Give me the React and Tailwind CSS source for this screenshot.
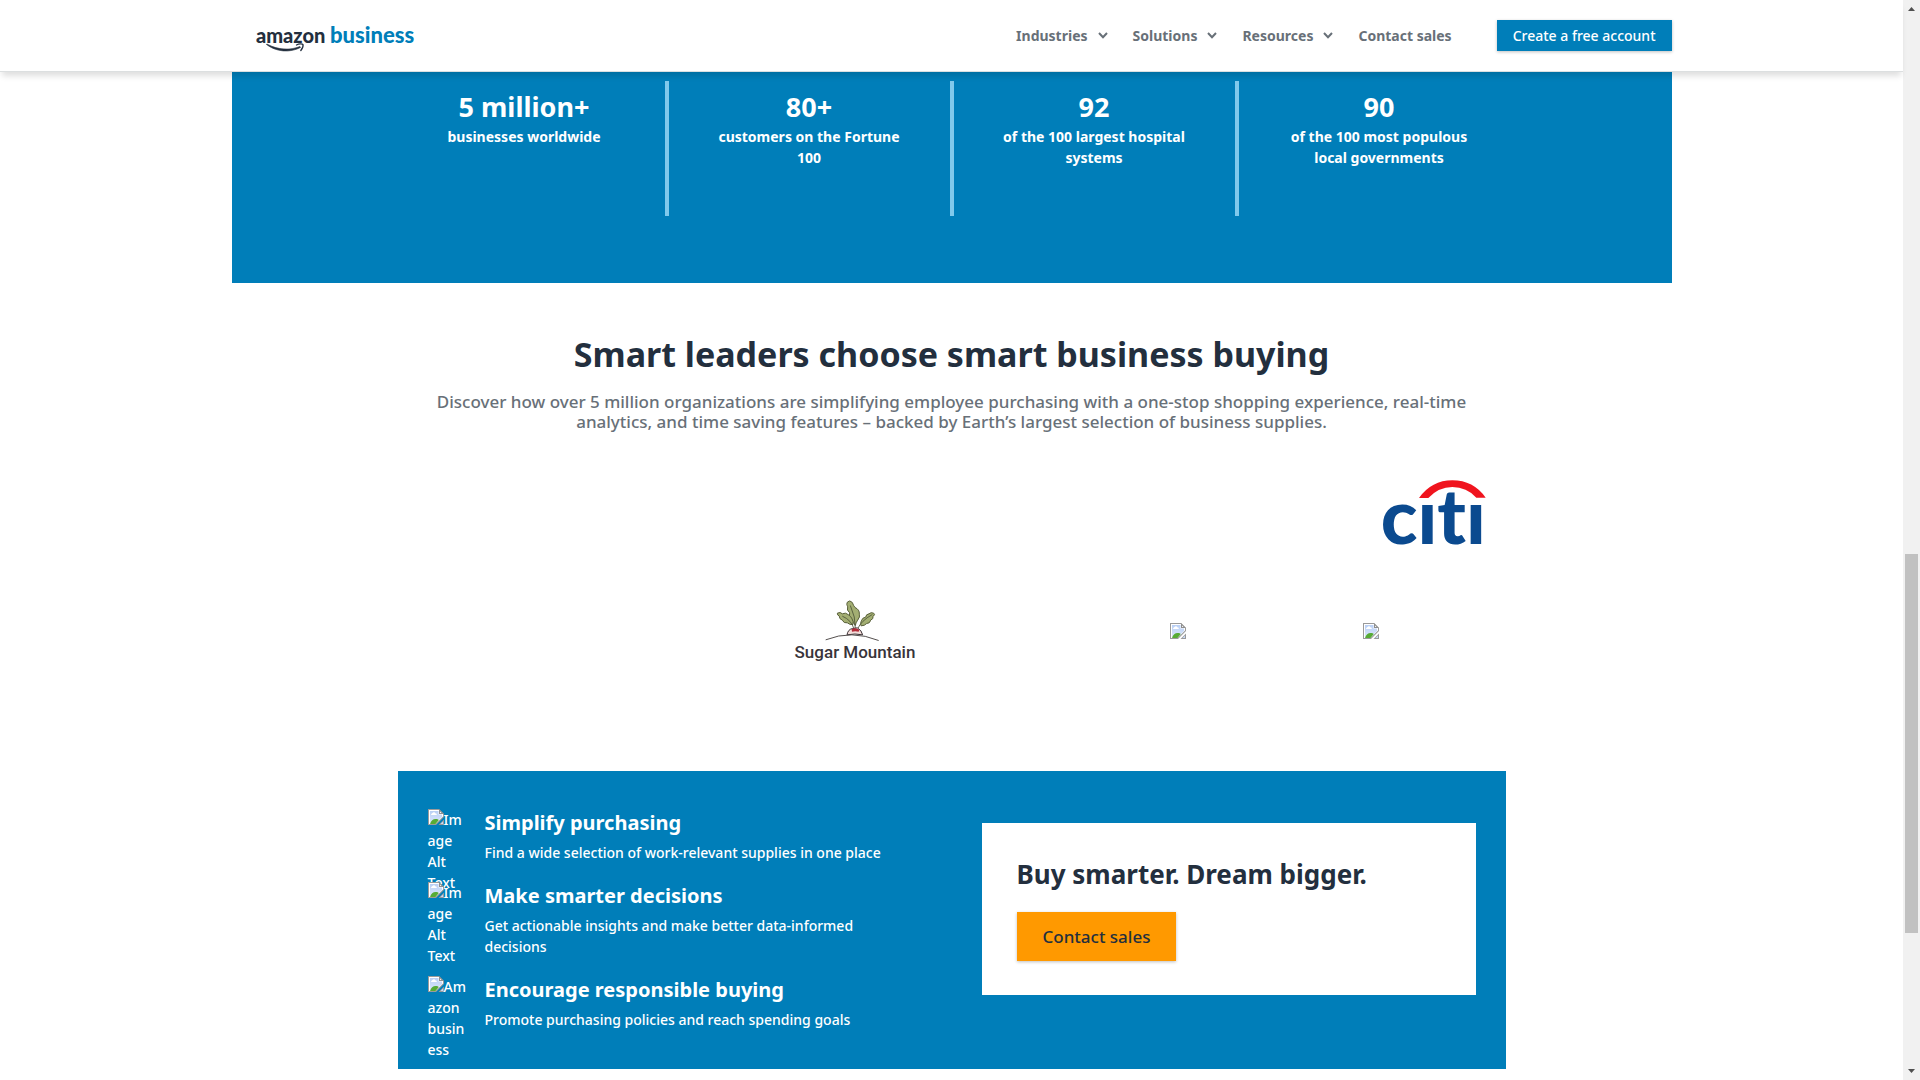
import { useId } from 'react'

const NAV = [
  { label: 'Industries', menu: true },
  { label: 'Solutions', menu: true },
  { label: 'Resources', menu: true },
]

const STATS = [
  { value: '5 million+', text: 'businesses worldwide' },
  { value: '80+', text: 'customers on the Fortune 100' },
  { value: '92', text: 'of the 100 largest hospital systems' },
  { value: '90', text: 'of the 100 most populous local governments' },
]

const BENEFITS = [
  {
    title: 'Simplify purchasing',
    text: 'Find a wide selection of work-relevant supplies in one place',
    alt: ['Im', 'age', 'Alt', 'Text'],
  },
  {
    title: 'Make smarter decisions',
    text: 'Get actionable insights and make better data-informed decisions',
    alt: ['Im', 'age', 'Alt', 'Text'],
  },
  {
    title: 'Encourage responsible buying',
    text: 'Promote purchasing policies and reach spending goals',
    alt: ['Am', 'azon', 'busin', 'ess'],
  },
]

function Chevron() {
  return (
    <svg viewBox="0 0 10 7" className="h-[7px] w-[10px]" fill="none" stroke="currentColor" strokeWidth="2" aria-hidden="true">
      <path d="M1 1l4 4.3L9 1" />
    </svg>
  )
}

function AmazonBusinessLogo() {
  return (
    <svg viewBox="0 0 164 36" className="h-9 w-[164px]" role="img" aria-label="amazon business">
      <text x="0" y="25" fontFamily="Lato, sans-serif" fontWeight="900" fontSize="20" fill="#232f3e">amazon</text>
      <text x="74" y="25" fontFamily="Lato, sans-serif" fontWeight="900" fontSize="22" fill="#007eb9">business</text>
      <path d="M10.500 26.500C20 34 34 35 44.500 29.500L44 28.500C34 32.500 22 32 10.800 26Z" fill="#232f3e" stroke="#232f3e" strokeWidth="0.600" strokeLinejoin="round" />
      <path d="M40.500 27C43 25.700 46.500 25.700 47 26.600C47.300 28 46 31 44.800 32.500" fill="none" stroke="#232f3e" strokeWidth="1.300" strokeLinecap="round" />
    </svg>
  )
}

function BrokenImage({ className = '' }) {
  const id = useId()
  return (
    <svg viewBox="0 0 16 16" className={`h-4 w-4 ${className}`} aria-hidden="true">
      <defs>
        <linearGradient id={id} x1="0" y1="0" x2="0" y2="1">
          <stop offset="0" stopColor="#b9cff5" />
          <stop offset="1" stopColor="#dbe7fb" />
        </linearGradient>
      </defs>
      <path d="M0 0H11L16 5V8L8 16H0Z" fill="#9a9a9a" />
      <path d="M1 1H11V5H15V7.500L7.500 15H1Z" fill="#fff" />
      <path d="M2 2H10.500V5.500H14V8L7.500 14.500H2Z" fill={`url(#${id})`} />
      <path d="M3 6C3 4.600 4.200 4.500 4.500 4C5 2.800 7 3 7.200 4.200C8.500 4.200 9 5 8.700 6Z" fill="#fff" />
      <path d="M2 15C3 11.500 5 10 7.500 10C9.300 10 10.300 10.500 10.800 11L7.500 15Z" fill="#57ab35" />
      <path d="M11 0V5H16Z" fill="#8f8f8f" />
      <path d="M12 2.500V4H13.500Z" fill="#fff" />
      <path d="M16 10.500V16H10.500Z" fill="#9a9a9a" />
      <path d="M15 12.500V15H12.500Z" fill="#c9daf8" />
    </svg>
  )
}

function CitiLogo() {
  return (
    <svg viewBox="60 50 327 210" className="h-[70px] w-[109px]" role="img" aria-label="citi">
      <text x="62" y="249" fontFamily="Lato, sans-serif" fontWeight="900" fontSize="228" fill="#0b4a8f" className="[font-variant-ligatures:none]">cıtı</text>
      <path d="M177 110Q215 57 277 57Q340 57 377 109L349 109Q320 77 277 77Q236 77 205 110Z" fill="#f0141e" />
    </svg>
  )
}

function SugarMountainLogo() {
  return (
    <svg viewBox="45 50 366 200" className="h-[67px] w-[122px]" role="img" aria-label="Sugar Mountain">
      <g fill="#a3ae72" stroke="#59603a" strokeWidth="3" strokeLinejoin="round">
        <path d="M205 62Q212 54 220 63Q223 72 228 78Q242 84 241 98Q244 106 236 116Q230 124 229 132Q222 122 217 112Q208 104 212 94Q202 86 206 76Q201 68 205 62Z" />
        <path d="M175 95Q184 90 190 97Q200 92 207 99Q216 104 219 112Q224 120 222 129Q213 131 205 124Q194 126 190 116Q180 112 181 104Q174 101 175 95Z" />
        <path d="M284 95Q276 91 270 97Q261 98 260 107Q250 108 247 118Q243 126 246 133Q257 133 263 126Q273 126 275 116Q284 112 282 105Q290 99 284 95Z" />
      </g>
      <path d="M190 104Q218 116 225 143M214 72Q230 106 229 142M280 99Q246 118 236 142" fill="none" stroke="#4b5236" strokeWidth="2.500" />
      <path d="M204 160Q207 143 221 141L235 139Q248 146 251 160Q228 155 204 160Z" fill="#f2dcd9" stroke="#3c3236" strokeWidth="3" />
      <path d="M218 143Q229 137 241 145L239 151Q229 147 219 151Z" fill="#b42a38" />
      <path d="M140 175Q218 144 299 177" fill="none" stroke="#55504f" strokeWidth="3" />
      <text x="228" y="230" textAnchor="middle" fontFamily="Roboto, sans-serif" fontWeight="500" fontSize="51" fill="#38343a">Sugar Mountain</text>
    </svg>
  )
}

function Header() {
  return (
    <header className="sticky top-0 z-10 border-b border-[#dcdfe0] bg-white shadow-[0_6px_6px_-2px_rgba(0,0,0,0.13)]">
      <div className="mx-auto flex h-[71px] max-w-[1440px] items-center justify-between pl-6">
        <a href="#home"><AmazonBusinessLogo /></a>
        <nav className="flex items-center gap-[25px] text-[14px] font-bold leading-5 text-[#687078]">
          {NAV.map((item) => (
            <button key={item.label} type="button" className="flex items-center gap-[10px]">
              {item.label}
              <Chevron />
            </button>
          ))}
          <a href="#contact">Contact sales</a>
          <a href="#signup" className="ml-5 bg-[#007eb9] px-4 py-[5px] font-medium leading-[21px] text-white shadow-[0_1px_3px_rgba(0,0,0,0.25)]">
            Create a free account
          </a>
        </nav>
      </div>
    </header>
  )
}

function Stats() {
  return (
    <section className="mx-auto max-w-[1440px] bg-[#007eb9] pb-[67px] pt-[9px] text-center text-white">
      <dl className="mx-auto flex h-[135px] max-w-[1136px] divide-x-4 divide-[#80c9ec]">
        {STATS.map((stat) => (
          <div key={stat.value} className="flex-1 px-10 pt-2">
            <dt className="text-[27px] font-bold leading-9">{stat.value}</dt>
            <dd className="mt-px text-[14px] font-bold leading-[21px]">{stat.text}</dd>
          </div>
        ))}
      </dl>
    </section>
  )
}

function Customers() {
  return (
    <section className="mx-auto max-w-[1108px] pt-[49px]">
      <div className="text-center">
        <h1 className="text-[34px] font-bold leading-[44px] text-[#232f3e]">Smart leaders choose smart business buying</h1>
        <p className="mt-4 px-8 text-[17px] font-medium leading-5 text-[#687078]">
          Discover how over 5 million organizations are simplifying employee purchasing with a one-stop shopping experience, real-time analytics, and time saving features – backed by Earth’s largest selection of business supplies.
        </p>
      </div>
      <div className="mt-[22px] grid auto-rows-[118px] grid-cols-6 items-center gap-x-[51px]">
        <div className="col-start-6 flex justify-center"><CitiLogo /></div>
        <div className="col-start-3 flex justify-center"><SugarMountainLogo /></div>
        <BrokenImage className="col-start-5" />
        <BrokenImage />
      </div>
    </section>
  )
}

function Benefits() {
  return (
    <section className="mx-auto mt-[81px] flex max-w-[1108px] items-start justify-between bg-[#007eb9] px-[30px] text-white">
      <ul className="flex flex-col gap-[18px] pb-[39px] pt-[37px]">
        {BENEFITS.map((item) => (
          <li key={item.title} className="flex">
            <div className="mt-px h-0 w-[57px] shrink-0 text-[14px] font-medium leading-[21px]">
              {item.alt.map((line, i) => (
                <span key={line} className="flex items-start">
                  {i === 0 && <BrokenImage className="shrink-0" />}
                  {line}
                </span>
              ))}
            </div>
            <div className="max-w-[420px]">
              <h2 className="text-[20px] font-bold leading-[30px]">{item.title}</h2>
              <p className="mt-1 text-[14px] font-medium leading-[21px]">{item.text}</p>
            </div>
          </li>
        ))}
      </ul>
      <div className="mt-[52px] w-[494px] bg-white px-[35px] pb-[34px] pt-[33px] text-[#232f3e]">
        <h2 className="text-[26px] font-bold leading-9">Buy smarter. Dream bigger.</h2>
        <a href="#contact" className="mt-5 inline-block bg-[#ff9900] px-[26px] py-[14px] align-top text-[17px] font-medium leading-[21px] shadow-[0_1px_3px_rgba(0,0,0,0.25)]">
          Contact sales
        </a>
      </div>
    </section>
  )
}

function ScrollTrack() {
  return (
    <div className="sticky top-0 flex h-screen w-[17px] flex-col items-center bg-[#f1f1f1] text-[#505050]" aria-hidden="true">
      <svg viewBox="0 0 17 17" className="h-[17px] w-[17px]"><path d="M5 11h7L8.500 7Z" fill="currentColor" /></svg>
      <div className="flex min-h-0 w-full flex-1 flex-col items-center">
        <div className="flex-[537]" />
        <div className="w-[13px] flex-[379] bg-[#c1c1c1]" />
        <div className="flex-[130]" />
      </div>
      <svg viewBox="0 0 17 17" className="h-[17px] w-[17px]"><path d="M5 6h7L8.500 10Z" fill="currentColor" /></svg>
    </div>
  )
}

export default function App() {
  return (
    <div className="flex min-h-screen items-start bg-white font-['Noto_Sans',sans-serif]">
      <div className="min-w-0 flex-1">
        <Header />
        <main>
          <Stats />
          <Customers />
          <Benefits />
        </main>
      </div>
      <ScrollTrack />
    </div>
  )
}
